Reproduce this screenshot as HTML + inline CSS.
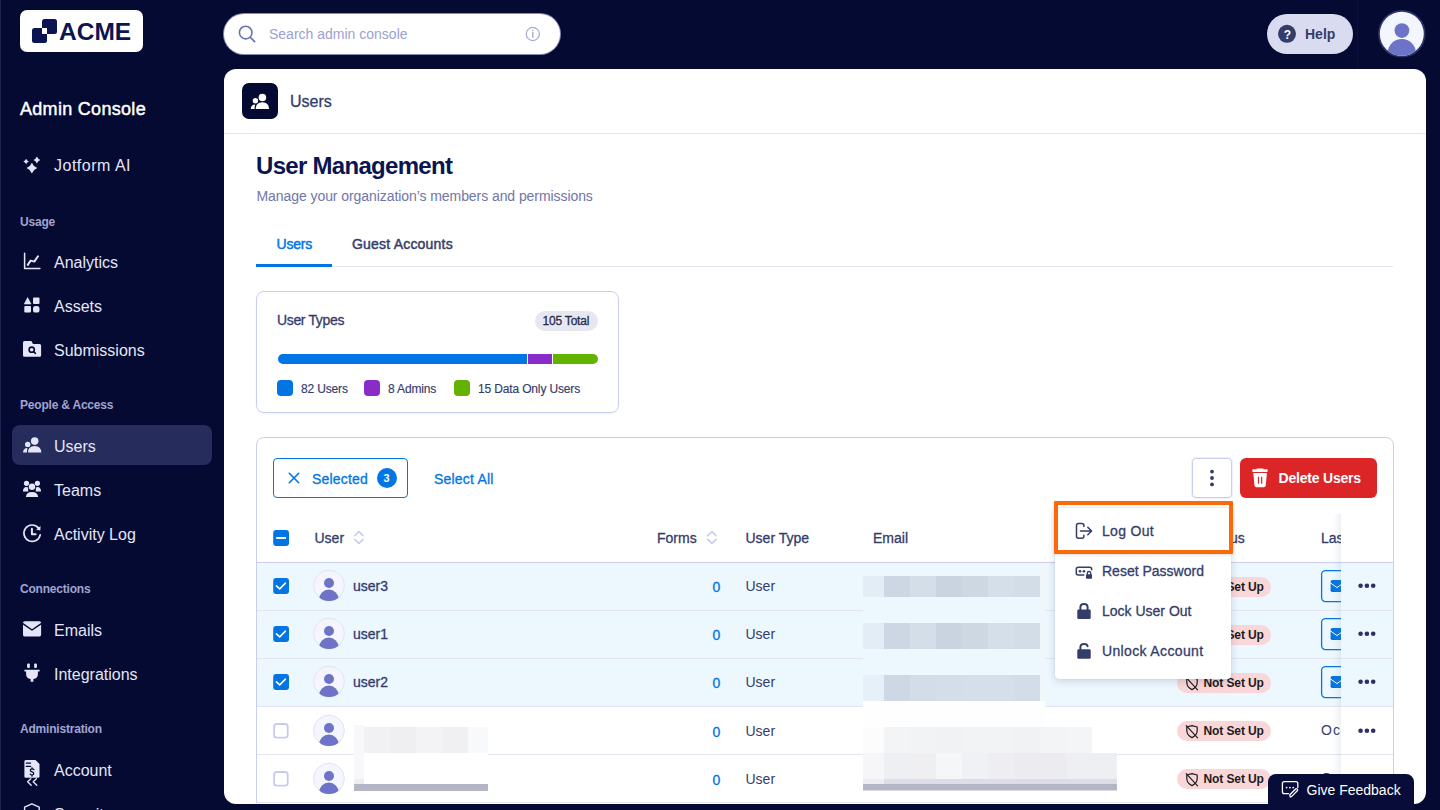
<!DOCTYPE html>
<html><head><meta charset="utf-8">
<style>
*{box-sizing:border-box;margin:0;padding:0}
html,body{width:1440px;height:810px;overflow:hidden}
body{background:#050a33;font-family:"Liberation Sans",sans-serif;position:relative;color:#343c6a}
.abs{position:absolute}
.med{-webkit-text-stroke:0.3px currentColor}
.med2{-webkit-text-stroke:0.45px currentColor}
.t{position:absolute;white-space:nowrap;line-height:1}
#edge{left:0;top:0;width:1px;height:810px;background:#1c2150}
#logo{left:20px;top:10px;width:123px;height:42px;background:#fff;border-radius:7px}
.sq{position:absolute;width:15px;height:15px;background:#0b1552;border-radius:2.5px}
.side{color:#e4e6f7;font-size:16px;left:54px;margin-top:2px}
.sec{color:#a0a4d0;font-size:12px;font-weight:bold;left:20px;margin-top:1px;letter-spacing:-0.2px}
#act{left:12px;top:425px;width:200px;height:40px;border-radius:8px;background:#262c5c}
</style></head><body>
<div id="edge" class="abs"></div>
<div id="logo" class="abs">
  <div class="sq" style="left:21.5px;top:9px"></div>
  <div class="sq" style="left:12px;top:18px"></div>
  <div class="abs" style="left:21.5px;top:18.3px;width:5.3px;height:5.3px;background:#fff"></div>
  <div class="t" style="left:39px;top:10px;font-size:24.5px;font-weight:bold;color:#0b1552">ACME</div>
</div>
<div class="t med2" style="left:20px;top:100px;font-size:18px;color:#fff;letter-spacing:0.3px">Admin Console</div>
<div id="act" class="abs"></div>
<div class="t side" style="top:156px;letter-spacing:0.5px">Jotform AI</div>
<div class="t sec" style="top:215px">Usage</div>
<div class="t side" style="top:253px">Analytics</div>
<div class="t side" style="top:297px">Assets</div>
<div class="t side" style="top:341px">Submissions</div>
<div class="t sec" style="top:398px">People &amp; Access</div>
<div class="t side" style="top:437px">Users</div>
<div class="t side" style="top:481px">Teams</div>
<div class="t side" style="top:525px">Activity Log</div>
<div class="t sec" style="top:582px">Connections</div>
<div class="t side" style="top:621px">Emails</div>
<div class="t side" style="top:665px">Integrations</div>
<div class="t sec" style="top:722px">Administration</div>
<div class="t side" style="top:761px">Account</div>
<div class="t side" style="top:805px">Security</div>

<svg class="abs" style="left:0;top:0" width="224" height="810" viewBox="0 0 224 810">
<g fill="#e4e6f7"><path d="M31.9 162.7 Q33.412 166.588 37.3 168.1 Q33.412 169.612 31.9 173.5 Q30.387999999999998 169.612 26.5 168.1 Q30.387999999999998 166.588 31.9 162.7Z"/><path d="M36.9 156.4 Q37.879999999999995 158.92000000000002 40.4 159.9 Q37.879999999999995 160.88 36.9 163.4 Q35.92 160.88 33.4 159.9 Q35.92 158.92000000000002 36.9 156.4Z"/><path d="M26.1 158.7 Q26.884 160.716 28.900000000000002 161.5 Q26.884 162.284 26.1 164.3 Q25.316000000000003 162.284 23.3 161.5 Q25.316000000000003 160.716 26.1 158.7Z"/></g>
<g fill="none" stroke="#e4e6f7" stroke-linecap="round" stroke-linejoin="round">
 <path d="M24.6 253.3 V268.4 H39.9" stroke-width="1.5"/>
 <path d="M27.8 264.9 L30.6 260.6 L34.3 261.6 L38 256.2" stroke-width="2"/>
</g>
<g fill="#e4e6f7">
 <path d="M24.3 304 L27.65 297.6 L31 304 Z" stroke="#e4e6f7" stroke-width="0.6" stroke-linejoin="round"/>
 <rect x="33" y="297.4" width="6.5" height="6.6" rx="1"/>
 <rect x="24.3" y="306.1" width="6.7" height="6.5" rx="1"/>
 <rect x="33" y="306.1" width="6.5" height="6.5" rx="2.6"/>
 <path d="M23 342.4 Q23 340.9 24.5 340.9 H31.3 L33 344 H39.6 Q41.1 344 41.1 345.5 V355.3 Q41.1 356.8 39.6 356.8 H24.5 Q23 356.8 23 355.3 Z"/>
</g>
<g fill="none" stroke="#050a33" stroke-width="1.6" stroke-linecap="round">
 <circle cx="31.7" cy="349.7" r="2.6"/>
 <path d="M33.8 351.8 L35.4 353.4"/>
</g>
<g fill="#e4e6f7">
 <circle cx="34.7" cy="441.1" r="3.8"/>
 <path d="M28 452.6 Q28 445.9 34.65 445.9 Q41.3 445.9 41.3 452.6 Z"/>
 <circle cx="27.7" cy="444.4" r="2.7"/>
 <path d="M23 452.6 Q23.3 448.1 27.4 448.1 L26.8 452.6 Z"/>
 <circle cx="26.5" cy="483.3" r="2.6"/>
 <circle cx="37.4" cy="483.3" r="2.6"/>
 <circle cx="32" cy="486.8" r="3.2"/>
 <path d="M22.9 491.6 Q23.2 487.1 26.3 487.1 Q27.5 487.1 28.3 487.7 Q27.6 489.6 28.5 491.6Z"/>
 <path d="M41.1 491.6 Q40.8 487.1 37.7 487.1 Q36.5 487.1 35.7 487.7 Q36.4 489.6 35.5 491.6Z"/>
 <path d="M25.9 497.1 Q26.3 492.1 32 492.1 Q37.7 492.1 38.1 497.1Z"/>
</g>
<g fill="none" stroke="#e4e6f7" stroke-linecap="round" stroke-linejoin="round">
 <path d="M40.2 534.8 A8.2 8.2 0 1 1 38.4 527.9" stroke-width="1.7"/>
 <path d="M31.9 528.8 V534.2 H35.6" stroke-width="2"/>
</g>
<path d="M40.6 526 L40.3 530.4 L36.1 529.6 Z" fill="#e4e6f7"/>
<g fill="#e4e6f7">
 <rect x="23" y="621.2" width="18.1" height="15.2" rx="1.6"/>
 <rect x="27.1" y="663.6" width="2.8" height="4.4" rx="1"/>
 <rect x="34.1" y="663.6" width="2.8" height="4.4" rx="1"/>
 <path d="M24.3 670.4 Q24.3 669.7 25 669.7 H39 Q39.7 669.7 39.7 670.4 V671 Q39.7 671.5 39 671.5 H37.9 V674 Q37.9 678.7 33.4 679 V681.7 H30.6 V679 Q26.1 678.7 26.1 674 V671.5 H25 Q24.3 671.5 24.3 671Z"/>
 <path d="M24.4 761.4 Q24.4 759.9 25.9 759.9 H35.5 L39.5 763.9 V776.3 Q39.5 777.8 38 777.8 H25.9 Q24.4 777.8 24.4 776.3Z"/>
</g>
<g fill="none" stroke="#050a33" stroke-width="1.5" stroke-linecap="round" stroke-linejoin="round">
 <path d="M22.8 623.6 L32 630 L41.3 623.6"/>
 <path d="M26.3 763.1 H30.6 M26.3 766.4 H30.6" stroke-width="1.3"/>
 <path d="M34 769.8 Q33.5 768.9 32 768.9 Q30.3 768.9 30.3 770.3 Q30.3 771.5 32 771.8 Q33.8 772.2 33.8 773.6 Q33.8 775 32 775 Q30.6 775 30.2 774" stroke-width="1.2"/>
 <path d="M32 767.6 V768.8 M32 775 V776.2" stroke-width="1.1"/>
</g>
<path d="M35.6 759.9 V763.9 H39.5" fill="#050a33" opacity="0"/>
<g fill="none" stroke="#e4e6f7" stroke-width="1.4" stroke-linecap="round" stroke-linejoin="round">
 <path d="M30.8 778.8 L27.6 781.8 L31.2 785.2"/>
 <path d="M36.4 778.8 L33.2 781.8 L36.8 785.2"/>
 <path d="M24.6 810 V807.2 L31.9 803.8 L39.2 807.2 V810"/>
</g>
</svg>

<!-- HEADER -->
<div class="abs" style="left:224px;top:14px;width:336px;height:40px;border-radius:20px;background:#fff;box-shadow:0 0 0 1px rgba(190,196,235,0.7)"></div>
<div class="t" style="left:269px;top:27px;font-size:14px;color:#9ba1cf">Search admin console</div>
<svg class="abs" style="left:224px;top:0" width="1216" height="69" viewBox="224 0 1216 69">
 <g fill="none" stroke="#6a72b0" stroke-width="1.6" stroke-linecap="round">
  <circle cx="245.7" cy="32.6" r="6.3"/>
  <path d="M250.6 37.6 L254.6 41.6"/>
 </g>
 <g fill="none" stroke="#a6acd6" stroke-width="1.2">
  <circle cx="532.8" cy="34" r="6.6"/>
 </g>
 <path d="M532.8 32.2 V37.2" stroke="#a6acd6" stroke-width="1.4" stroke-linecap="round"/>
 <circle cx="532.8" cy="30.3" r="0.8" fill="#a6acd6"/>
 <rect x="1267" y="14" width="86" height="40" rx="20" fill="#d9dcf0"/>
 <circle cx="1287" cy="33.8" r="9" fill="#343c6a"/>
 <rect x="1357" y="0" width="1" height="69" fill="#0b1040"/>
 <circle cx="1401.8" cy="33.8" r="23.8" fill="#2e3366"/>
 <circle cx="1401.8" cy="33.8" r="22" fill="#f3f6fd"/>
 <clipPath id="avc"><circle cx="1401.8" cy="33.8" r="22"/></clipPath>
 <g clip-path="url(#avc)" fill="#6d74c8">
  <circle cx="1401.9" cy="30.6" r="7.4"/>
  <ellipse cx="1401.8" cy="53" rx="14" ry="14"/>
 </g>
</svg>
<div class="t" style="left:1283.7px;top:28.6px;font-size:12px;font-weight:bold;color:#fff">?</div>
<div class="t" style="left:1305px;top:27.3px;font-size:14px;font-weight:bold;color:#343c6a">Help</div>

<!-- PANEL -->
<div class="abs" style="left:224px;top:69px;width:1202px;height:735px;border-radius:12px;background:#fff;overflow:hidden">
</div>

<!-- PANEL HEADER -->
<div class="abs" style="left:242px;top:83px;width:36px;height:36px;border-radius:7px;background:#050a33"></div>
<div class="t med" style="left:290px;top:94px;font-size:16px;color:#343c6a">Users</div>
<div class="abs" style="left:224px;top:133px;width:1202px;height:1px;background:#e3e5f5"></div>
<div class="t" style="left:256px;top:154px;font-size:24px;font-weight:bold;color:#0a1551;letter-spacing:-0.7px">User Management</div>
<div class="t" style="left:256.5px;top:189px;font-size:14px;color:#6f76a7;letter-spacing:-0.07px">Manage your organization’s members and permissions</div>
<div class="t med2" style="left:276.5px;top:237px;font-size:14px;color:#0075e3;letter-spacing:-0.2px">Users</div>
<div class="t med2" style="left:352px;top:237px;font-size:14px;color:#343c6a;letter-spacing:0.2px">Guest Accounts</div>
<div class="abs" style="left:256px;top:266px;width:1137px;height:1px;background:#e3e5f5"></div>
<div class="abs" style="left:256px;top:264px;width:76px;height:3px;background:#0075e3"></div>

<!-- USER TYPES CARD -->
<div class="abs" style="left:256px;top:291px;width:363px;height:122px;border:1px solid #c9cef0;border-radius:8px;box-shadow:0 1px 2px rgba(80,90,160,0.08)"></div>
<div class="t med" style="left:277px;top:313px;font-size:14px;color:#343c6a;letter-spacing:-0.35px">User Types</div>
<div class="abs" style="left:535px;top:311px;width:63px;height:20px;border-radius:10px;background:#e6e7f0"></div>
<div class="t med" style="left:542.5px;top:315px;font-size:12px;color:#272c4d;letter-spacing:-0.2px">105 Total</div>
<div class="abs" style="left:277.5px;top:354px;width:320px;height:10px;border-radius:5px;overflow:hidden;background:#fff">
  <div class="abs" style="left:0;top:0;width:249.7px;height:10px;background:#0075e3"></div>
  <div class="abs" style="left:250.7px;top:0;width:23.4px;height:10px;background:#8a2dc8"></div>
  <div class="abs" style="left:275.1px;top:0;width:45px;height:10px;background:#64b200"></div>
</div>
<div class="abs" style="left:277px;top:380px;width:16px;height:16px;border-radius:4px;background:#0075e3"></div>
<div class="abs" style="left:364px;top:380px;width:16px;height:16px;border-radius:4px;background:#8a2dc8"></div>
<div class="abs" style="left:454px;top:380px;width:16px;height:16px;border-radius:4px;background:#64b200"></div>
<div class="t" style="left:301px;top:382.5px;font-size:12px;color:#343c6a;letter-spacing:-0.15px;-webkit-text-stroke:0.15px currentColor">82 Users</div>
<div class="t" style="left:388px;top:382.5px;font-size:12px;color:#343c6a;letter-spacing:-0.15px;-webkit-text-stroke:0.15px currentColor">8 Admins</div>
<div class="t" style="left:478px;top:382.5px;font-size:12px;color:#343c6a;letter-spacing:-0.15px;-webkit-text-stroke:0.15px currentColor">15 Data Only Users</div>


<div class="abs" style="left:0;top:0;width:1440px;height:803px;overflow:hidden">
<!-- TABLE CARD -->
<div class="abs" style="left:256px;top:437px;width:1138px;height:400px;border:1px solid #c9cef0;border-radius:8px"></div>
<!-- TOOLBAR -->
<div class="abs" style="left:273px;top:458px;width:135px;height:40px;border:1px solid #0075e3;border-radius:4px"></div>
<div class="t med" style="left:312px;top:471.5px;letter-spacing:0.2px;font-size:14px;color:#0075e3">Selected</div>
<div class="abs" style="left:377px;top:468px;width:20px;height:20px;border-radius:10px;background:#0075e3"></div>
<div class="t" style="left:383.5px;top:472.5px;font-size:11px;font-weight:bold;color:#fff">3</div>
<div class="t med" style="left:434px;top:471.5px;letter-spacing:0.2px;font-size:14px;color:#0075e3">Select All</div>
<div class="abs" style="left:1192px;top:458px;width:40px;height:40px;border:1px solid #c9cef0;border-radius:4px;box-shadow:0 0 0 1px rgba(220,225,250,0.5)"></div>
<div class="abs" style="left:1240px;top:458px;width:137px;height:40px;border-radius:6px;background:#dc2527"></div>
<div class="t" style="left:1278.5px;top:471px;font-size:14px;font-weight:bold;color:#fff;letter-spacing:-0.2px">Delete Users</div>

<!-- HEADER ROW -->
<div class="abs" style="left:257px;top:562px;width:1136px;height:1px;background:#c9cef0"></div>
<div class="t med" style="left:314.5px;top:531px;font-size:14px;color:#343c6a">User</div>
<div class="t med" style="left:657px;top:531px;font-size:14px;color:#343c6a">Forms</div>
<div class="t med" style="left:745.5px;top:531px;font-size:14px;color:#343c6a">User Type</div>
<div class="t med" style="left:873px;top:531px;font-size:14px;color:#343c6a">Email</div>
<div class="t med" style="left:1177px;top:531px;font-size:14px;color:#343c6a">2FA Status</div>
<div class="t med" style="left:1321px;top:531px;font-size:14px;color:#343c6a">Last Seen</div>
<div class="abs" style="left:257px;top:563px;width:1136px;height:48px;background:#edf7fe;border-bottom:1px solid #e3e5f5"></div>
<div class="abs" style="left:257px;top:611px;width:1136px;height:48px;background:#edf7fe;border-bottom:1px solid #e3e5f5"></div>
<div class="abs" style="left:257px;top:659px;width:1136px;height:48px;background:#edf7fe;border-bottom:1px solid #e3e5f5"></div>
<div class="abs" style="left:257px;top:707px;width:1136px;height:48px;background:#fff;border-bottom:1px solid #e3e5f5"></div>
<div class="abs" style="left:257px;top:755px;width:1136px;height:48px;background:#fff;border-bottom:1px solid #e3e5f5"></div>
<div class="t med" style="left:353px;top:579px;font-size:14px;color:#343c6a">user3</div>
<div class="t med" style="left:712.5px;top:580px;font-size:14px;color:#0075e3">0</div>
<div class="t" style="left:745.5px;top:579px;font-size:14px;color:#343c6a">User</div>
<div class="abs" style="left:1177px;top:577px;width:94px;height:20px;border-radius:10px;background:#f9d6d7"></div>
<div class="t" style="left:1203.5px;top:580.5px;font-size:12px;font-weight:bold;color:#1c1c1c;letter-spacing:-0.1px">Not Set Up</div>
<div class="t med" style="left:353px;top:627px;font-size:14px;color:#343c6a">user1</div>
<div class="t med" style="left:712.5px;top:628px;font-size:14px;color:#0075e3">0</div>
<div class="t" style="left:745.5px;top:627px;font-size:14px;color:#343c6a">User</div>
<div class="abs" style="left:1177px;top:625px;width:94px;height:20px;border-radius:10px;background:#f9d6d7"></div>
<div class="t" style="left:1203.5px;top:628.5px;font-size:12px;font-weight:bold;color:#1c1c1c;letter-spacing:-0.1px">Not Set Up</div>
<div class="t med" style="left:353px;top:675px;font-size:14px;color:#343c6a">user2</div>
<div class="t med" style="left:712.5px;top:676px;font-size:14px;color:#0075e3">0</div>
<div class="t" style="left:745.5px;top:675px;font-size:14px;color:#343c6a">User</div>
<div class="abs" style="left:1177px;top:673px;width:94px;height:20px;border-radius:10px;background:#f9d6d7"></div>
<div class="t" style="left:1203.5px;top:676.5px;font-size:12px;font-weight:bold;color:#1c1c1c;letter-spacing:-0.1px">Not Set Up</div>
<div class="t med" style="left:712.5px;top:725px;font-size:14px;color:#0075e3">0</div>
<div class="t" style="left:745.5px;top:724px;font-size:14px;color:#343c6a">User</div>
<div class="abs" style="left:1177px;top:721px;width:94px;height:20px;border-radius:10px;background:#f9d6d7"></div>
<div class="t" style="left:1203.5px;top:724.5px;font-size:12px;font-weight:bold;color:#1c1c1c;letter-spacing:-0.1px">Not Set Up</div>
<div class="t" style="left:1321px;top:723px;font-size:14px;color:#343c6a;letter-spacing:1px">Oct 1</div>
<div class="t med" style="left:712.5px;top:773px;font-size:14px;color:#0075e3">0</div>
<div class="t" style="left:745.5px;top:772px;font-size:14px;color:#343c6a">User</div>
<div class="abs" style="left:1177px;top:769px;width:94px;height:20px;border-radius:10px;background:#f9d6d7"></div>
<div class="t" style="left:1203.5px;top:772.5px;font-size:12px;font-weight:bold;color:#1c1c1c;letter-spacing:-0.1px">Not Set Up</div>
<div class="t" style="left:1321px;top:771px;font-size:14px;color:#343c6a;letter-spacing:1px">Oct 1</div>
<svg class="abs" style="left:0;top:0" width="1440" height="810" viewBox="0 0 1440 810">
 <g fill="none" stroke="#0075e3" stroke-width="1.6" stroke-linecap="round"><path d="M289.3 473.3 L298.7 482.7 M298.7 473.3 L289.3 482.7"/></g>
 <g fill="#343c6a"><circle cx="1212" cy="471.6" r="1.9"/><circle cx="1212" cy="478" r="1.9"/><circle cx="1212" cy="484.4" r="1.9"/></g>
 <g fill="#fff">
  <path d="M1256.3 469.3 Q1256.3 468.6 1257.3 468.6 H1262.7 Q1263.7 468.6 1263.7 469.3 H1267 Q1267.7 469.3 1267.7 470 V471.2 Q1267.7 471.9 1267 471.9 H1253 Q1252.3 471.9 1252.3 471.2 V470 Q1252.3 469.3 1253 469.3Z"/>
  <path d="M1253.3 473 H1266.9 L1265.7 485.6 Q1265.5 487.3 1263.8 487.3 H1256.4 Q1254.7 487.3 1254.5 485.6Z"/>
 </g>
 <g stroke="#dc2527" stroke-width="1.2" stroke-linecap="round"><path d="M1258.5 477.2 V483.2 M1261.7 477.2 V483.2"/></g>
 <rect x="273.2" y="529.9" width="15.8" height="16" rx="3" fill="#0075e3"/>
 <rect x="276.2" y="537" width="9.8" height="1.9" fill="#fff"/>
 <g fill="none" stroke="#c5caee" stroke-width="1.5" stroke-linecap="round" stroke-linejoin="round">
  <path d="M354.6 535.7 L359 531.6 L363.1 535.7 M354.6 539.4 L359 543.4 L363.1 539.4"/>
  <path d="M707.6 535.7 L712 531.6 L716.1 535.7 M707.6 539.4 L712 543.4 L716.1 539.4"/>
 </g>
 <rect x="273.2" y="577.9" width="15.8" height="16" rx="3" fill="#0075e3"/>
<path d="M276.4 585.9 L279.7 588.9 L285.4 583.1" fill="none" stroke="#fff" stroke-width="1.6" stroke-linecap="round" stroke-linejoin="round"/>
<circle cx="329" cy="585.6" r="15.4" fill="#f5f6fd" stroke="#e3e2f2" stroke-width="1"/>
<clipPath id="ac0"><circle cx="329" cy="585.6" r="15.4"/></clipPath>
<g clip-path="url(#ac0)" fill="#6d74c8"><circle cx="329" cy="583.0" r="5"/><ellipse cx="328.9" cy="599.6" rx="9.8" ry="10"/></g>
<g fill="none" stroke="#1c1c1c" stroke-width="1.2" stroke-linecap="round" stroke-linejoin="round"><path d="M1192 581.6 L1197.2 583 V586.6 Q1197 591.6 1192 593.6 Q1187 591.6 1186.8 586.6 V583 Z"/><path d="M1186.2 581.6 L1197.6 593.8"/></g>
<rect x="1321.6" y="570.6" width="40" height="31" rx="4" fill="none" stroke="#0075e3" stroke-width="1.3"/>
<rect x="1330.6" y="579.9" width="14" height="12.2" rx="1.5" fill="#0075e3"/><path d="M1330 582.6 L1337 587.6 L1344 582.6" fill="none" stroke="#fff" stroke-width="1"/>
<rect x="273.2" y="625.9" width="15.8" height="16" rx="3" fill="#0075e3"/>
<path d="M276.4 633.9 L279.7 636.9 L285.4 631.1" fill="none" stroke="#fff" stroke-width="1.6" stroke-linecap="round" stroke-linejoin="round"/>
<circle cx="329" cy="633.6" r="15.4" fill="#f5f6fd" stroke="#e3e2f2" stroke-width="1"/>
<clipPath id="ac1"><circle cx="329" cy="633.6" r="15.4"/></clipPath>
<g clip-path="url(#ac1)" fill="#6d74c8"><circle cx="329" cy="631.0" r="5"/><ellipse cx="328.9" cy="647.6" rx="9.8" ry="10"/></g>
<g fill="none" stroke="#1c1c1c" stroke-width="1.2" stroke-linecap="round" stroke-linejoin="round"><path d="M1192 629.6 L1197.2 631 V634.6 Q1197 639.6 1192 641.6 Q1187 639.6 1186.8 634.6 V631 Z"/><path d="M1186.2 629.6 L1197.6 641.8"/></g>
<rect x="1321.6" y="618.6" width="40" height="31" rx="4" fill="none" stroke="#0075e3" stroke-width="1.3"/>
<rect x="1330.6" y="627.9" width="14" height="12.2" rx="1.5" fill="#0075e3"/><path d="M1330 630.6 L1337 635.6 L1344 630.6" fill="none" stroke="#fff" stroke-width="1"/>
<rect x="273.2" y="673.9" width="15.8" height="16" rx="3" fill="#0075e3"/>
<path d="M276.4 681.9 L279.7 684.9 L285.4 679.1" fill="none" stroke="#fff" stroke-width="1.6" stroke-linecap="round" stroke-linejoin="round"/>
<circle cx="329" cy="681.6" r="15.4" fill="#f5f6fd" stroke="#e3e2f2" stroke-width="1"/>
<clipPath id="ac2"><circle cx="329" cy="681.6" r="15.4"/></clipPath>
<g clip-path="url(#ac2)" fill="#6d74c8"><circle cx="329" cy="679.0" r="5"/><ellipse cx="328.9" cy="695.6" rx="9.8" ry="10"/></g>
<g fill="none" stroke="#1c1c1c" stroke-width="1.2" stroke-linecap="round" stroke-linejoin="round"><path d="M1192 677.6 L1197.2 679 V682.6 Q1197 687.6 1192 689.6 Q1187 687.6 1186.8 682.6 V679 Z"/><path d="M1186.2 677.6 L1197.6 689.8"/></g>
<rect x="1321.6" y="666.6" width="40" height="31" rx="4" fill="none" stroke="#0075e3" stroke-width="1.3"/>
<rect x="1330.6" y="675.9" width="14" height="12.2" rx="1.5" fill="#0075e3"/><path d="M1330 678.6 L1337 683.6 L1344 678.6" fill="none" stroke="#fff" stroke-width="1"/>
<rect x="274.1" y="724.0" width="13.6" height="13.6" rx="2.6" fill="#fff" stroke="#c5cbed" stroke-width="1.8"/>
<circle cx="329" cy="730.6" r="15.4" fill="#f5f6fd" stroke="#e3e2f2" stroke-width="1"/>
<clipPath id="ac3"><circle cx="329" cy="730.6" r="15.4"/></clipPath>
<g clip-path="url(#ac3)" fill="#6d74c8"><circle cx="329" cy="728.0" r="5"/><ellipse cx="328.9" cy="744.6" rx="9.8" ry="10"/></g>
<g fill="none" stroke="#1c1c1c" stroke-width="1.2" stroke-linecap="round" stroke-linejoin="round"><path d="M1192 725.6 L1197.2 727 V730.6 Q1197 735.6 1192 737.6 Q1187 735.6 1186.8 730.6 V727 Z"/><path d="M1186.2 725.6 L1197.6 737.8"/></g>
<rect x="274.1" y="772.0" width="13.6" height="13.6" rx="2.6" fill="#fff" stroke="#c5cbed" stroke-width="1.8"/>
<circle cx="329" cy="778.6" r="15.4" fill="#f5f6fd" stroke="#e3e2f2" stroke-width="1"/>
<clipPath id="ac4"><circle cx="329" cy="778.6" r="15.4"/></clipPath>
<g clip-path="url(#ac4)" fill="#6d74c8"><circle cx="329" cy="776.0" r="5"/><ellipse cx="328.9" cy="792.6" rx="9.8" ry="10"/></g>
<g fill="none" stroke="#1c1c1c" stroke-width="1.2" stroke-linecap="round" stroke-linejoin="round"><path d="M1192 773.6 L1197.2 775 V778.6 Q1197 783.6 1192 785.6 Q1187 783.6 1186.8 778.6 V775 Z"/><path d="M1186.2 773.6 L1197.6 785.8"/></g>
</svg>
<div class="abs" style="left:1341px;top:563px;width:52px;height:48px;background:#edf7fe;border-bottom:1px solid #e3e5f5"></div>
<div class="abs" style="left:1341px;top:611px;width:52px;height:48px;background:#edf7fe;border-bottom:1px solid #e3e5f5"></div>
<div class="abs" style="left:1341px;top:659px;width:52px;height:48px;background:#edf7fe;border-bottom:1px solid #e3e5f5"></div>
<div class="abs" style="left:1341px;top:707px;width:52px;height:48px;background:#fff;border-bottom:1px solid #e3e5f5"></div>
<div class="abs" style="left:1341px;top:755px;width:52px;height:48px;background:#fff;border-bottom:1px solid #e3e5f5"></div>
<div class="abs" style="left:1341px;top:514px;width:52px;height:49px;background:#fff;border-bottom:1px solid #c9cef0"></div>
<div class="abs" style="left:1333px;top:514px;width:8px;height:289px;background:linear-gradient(to right,rgba(120,140,170,0),rgba(120,140,170,0.12))"></div>
<svg class="abs" style="left:0;top:0" width="1440" height="810" viewBox="0 0 1440 810">
 <g fill="#2b3166"><circle cx="1360.6" cy="585.7" r="2.3"/><circle cx="1366.9" cy="585.7" r="2.3"/><circle cx="1373.2" cy="585.7" r="2.3"/><circle cx="1360.6" cy="633.7" r="2.3"/><circle cx="1366.9" cy="633.7" r="2.3"/><circle cx="1373.2" cy="633.7" r="2.3"/><circle cx="1360.6" cy="681.7" r="2.3"/><circle cx="1366.9" cy="681.7" r="2.3"/><circle cx="1373.2" cy="681.7" r="2.3"/><circle cx="1360.6" cy="730.7" r="2.3"/><circle cx="1366.9" cy="730.7" r="2.3"/><circle cx="1373.2" cy="730.7" r="2.3"/><circle cx="1360.6" cy="778.7" r="2.3"/><circle cx="1366.9" cy="778.7" r="2.3"/><circle cx="1373.2" cy="778.7" r="2.3"/></g>
</svg>
</div>
<!--OVERLAYS-->
<svg class="abs" style="left:0;top:0" width="1440" height="810" viewBox="0 0 1440 810">
<g fill="#fff" transform="translate(227.7,-343.6)">
 <circle cx="34.7" cy="441.1" r="3.8"/>
 <path d="M28 452.6 Q28 445.9 34.65 445.9 Q41.3 445.9 41.3 452.6 Z"/>
 <circle cx="27.7" cy="444.4" r="2.7"/>
 <path d="M23 452.6 Q23.3 448.1 27.4 448.1 L26.8 452.6 Z"/>
</g>
</svg>
<svg class="abs" style="left:0;top:0" width="1440" height="810" viewBox="0 0 1440 810"><rect x="863" y="563" width="182" height="138" fill="#edf7fe"/><rect x="1040" y="563" width="5" height="138" fill="#f0f6fc"/><rect x="863" y="576" width="21" height="21" fill="#e3edf6"/><rect x="884" y="576" width="26" height="21" fill="#ccd7e3"/><rect x="910" y="576" width="26" height="21" fill="#d4dee8"/><rect x="936" y="576" width="26" height="21" fill="#c9d4e0"/><rect x="962" y="576" width="26" height="21" fill="#cdd8e3"/><rect x="988" y="576" width="26" height="21" fill="#d5dfe9"/><rect x="1014" y="576" width="26" height="21" fill="#d3dde8"/><rect x="863" y="623" width="21" height="26" fill="#e3edf6"/><rect x="884" y="623" width="26" height="26" fill="#ccd7e3"/><rect x="910" y="623" width="26" height="26" fill="#d4dee8"/><rect x="936" y="623" width="26" height="26" fill="#c9d4e0"/><rect x="962" y="623" width="26" height="26" fill="#cdd8e3"/><rect x="988" y="623" width="26" height="26" fill="#d5dfe9"/><rect x="1014" y="623" width="26" height="26" fill="#d3dde8"/><rect x="863" y="675" width="21" height="26" fill="#e6f0f8"/><rect x="884" y="675" width="26" height="26" fill="#cdd8e4"/><rect x="910" y="675" width="26" height="26" fill="#d3dde8"/><rect x="936" y="675" width="26" height="26" fill="#d4dee9"/><rect x="962" y="675" width="26" height="26" fill="#d5dfe9"/><rect x="988" y="675" width="26" height="26" fill="#d5dfe9"/><rect x="1014" y="675" width="26" height="26" fill="#d3dde8"/><rect x="863" y="701" width="182" height="26" fill="#fefefe"/><rect x="863" y="727" width="254" height="64" fill="#fff"/><rect x="863" y="727" width="21" height="52" fill="#fcfcfd"/><rect x="884" y="727" width="26" height="26" fill="#f3f4f6"/><rect x="910" y="727" width="26" height="26" fill="#f2f3f5"/><rect x="936" y="727" width="26" height="26" fill="#f1f2f4"/><rect x="962" y="727" width="26" height="26" fill="#f2f3f5"/><rect x="988" y="727" width="26" height="26" fill="#f2f3f5"/><rect x="1014" y="727" width="26" height="26" fill="#f1f2f4"/><rect x="1040" y="727" width="26" height="26" fill="#f3f4f6"/><rect x="1066" y="727" width="26" height="26" fill="#f4f5f7"/><rect x="863" y="753" width="21" height="26" fill="#f6f6f8"/><rect x="884" y="753" width="26" height="26" fill="#eeeff2"/><rect x="910" y="753" width="26" height="26" fill="#efeff2"/><rect x="936" y="753" width="26" height="26" fill="#f5f6f8"/><rect x="962" y="753" width="26" height="26" fill="#f0f1f4"/><rect x="988" y="753" width="26" height="26" fill="#eeeef2"/><rect x="1014" y="753" width="26" height="26" fill="#ebebf0"/><rect x="1040" y="753" width="26" height="26" fill="#ebebf0"/><rect x="1066" y="753" width="26" height="26" fill="#eeeff2"/><rect x="1092" y="753" width="25" height="26" fill="#eeeff2"/><rect x="863" y="779" width="254" height="5" fill="#dcdde6"/><rect x="863" y="779" width="21" height="5" fill="#eeeef2"/><rect x="863" y="784" width="254" height="6.5" fill="#b4b6c6"/><rect x="354" y="725" width="134" height="66" fill="#fff"/><rect x="354" y="725" width="10" height="54" fill="#f8f8fa"/><rect x="364" y="727" width="26" height="26" fill="#f1f1f3"/><rect x="390" y="727" width="26" height="26" fill="#efeff2"/><rect x="416" y="727" width="26" height="26" fill="#f3f3f5"/><rect x="442" y="727" width="26" height="26" fill="#f0f0f2"/><rect x="468" y="727" width="20" height="26" fill="#f8f9fb"/><rect x="354" y="779" width="10" height="5" fill="#eeeef2"/><rect x="354" y="784" width="134" height="7" fill="#b4b6c6"/></svg>
<div class="abs" style="left:1055px;top:508px;width:176px;height:171px;background:#fff;border-radius:4px;box-shadow:0 2px 8px rgba(10,21,81,0.16),0 0 1px rgba(10,21,81,0.2)"></div>
<div class="t med" style="left:1102px;top:524px;font-size:14px;color:#343c6a;letter-spacing:0.3px">Log Out</div>
<div class="t med" style="left:1102px;top:564px;font-size:14px;color:#343c6a">Reset Password</div>
<div class="t med" style="left:1102px;top:604px;font-size:14px;color:#343c6a">Lock User Out</div>
<div class="t med" style="left:1102px;top:644px;font-size:14px;color:#343c6a;letter-spacing:0.35px">Unlock Account</div>
<svg class="abs" style="left:0;top:0" width="1440" height="810" viewBox="0 0 1440 810">
 <g fill="none" stroke="#343c6a" stroke-width="1.5" stroke-linecap="round" stroke-linejoin="round">
  <path d="M1083.9 526.4 V525.4 Q1083.9 523.4 1081.9 523.4 H1078.5 Q1076.5 523.4 1076.5 525.4 V536.2 Q1076.5 538.2 1078.5 538.2 H1081.9 Q1083.9 538.2 1083.9 536.2 V535.2"/>
  <path d="M1080.4 531 H1091.4 M1087.8 527.2 L1091.6 531 L1087.8 534.8"/>
  <path d="M1083.8 575.1 H1078.3 Q1076.3 575.1 1076.3 573.1 V569.3 Q1076.3 567.3 1078.3 567.3 H1089.7 Q1091.7 567.3 1091.7 569.3 V569.8"/>
 </g>
 <g fill="#343c6a">
  <circle cx="1080" cy="571.3" r="1.3"/><circle cx="1083.9" cy="571.3" r="1.3"/>
  <rect x="1086" y="574.3" width="6" height="4.4" rx="0.8"/>
  <rect x="1077.3" y="609.4" width="13.4" height="9.6" rx="1.3"/>
  <rect x="1077.3" y="649.2" width="13.4" height="9.6" rx="1.3"/>
 </g>
 <g fill="none" stroke="#343c6a" stroke-linecap="round">
  <path d="M1087.3 574.6 V573.2 Q1087.3 571.5 1089 571.5 Q1090.7 571.5 1090.7 573.2 V574.6" stroke-width="1.3"/>
  <path d="M1080.4 609.8 V607.3 Q1080.4 603.9 1084 603.9 Q1087.6 603.9 1087.6 607.3 V609.8" stroke-width="2"/>
  <path d="M1080.4 649.6 V647.3 Q1080.4 643.9 1084 643.9 Q1087.3 643.9 1087.6 646.2" stroke-width="2"/>
 </g>
</svg>
<div class="abs" style="left:1054px;top:501px;width:179px;height:53px;border:4px solid #f96a0a;border-radius:1px;box-shadow:0 1px 3px rgba(0,0,0,0.15)"></div>

<div class="abs" style="left:1268px;top:774px;width:146px;height:40px;border-radius:8px 8px 0 0;background:#070c38"></div>
<div class="t" style="left:1306.5px;top:783px;font-size:14px;color:#fff">Give Feedback</div>
<svg class="abs" style="left:0;top:0" width="1440" height="810" viewBox="0 0 1440 810">
 <g fill="none" stroke="#fff" stroke-width="1.3" stroke-linecap="round" stroke-linejoin="round">
  <path d="M1288.5 793.6 H1284.3 Q1282.4 793.6 1282.4 791.7 V783.6 Q1282.4 781.7 1284.3 781.7 H1295.9 Q1297.8 781.7 1297.8 783.6 V787.4"/>
  <path d="M1290.3 797 L1289.8 794.8 L1295.6 789 Q1296.4 788.2 1297.3 789.1 Q1298.1 790 1297.3 790.8 L1291.5 796.6 Z"/>
 </g>
 <g fill="#fff"><circle cx="1286.6" cy="787.6" r="0.9"/><circle cx="1289.9" cy="787.6" r="0.9"/><circle cx="1293.2" cy="787.6" r="0.9"/></g>
</svg></body></html>
